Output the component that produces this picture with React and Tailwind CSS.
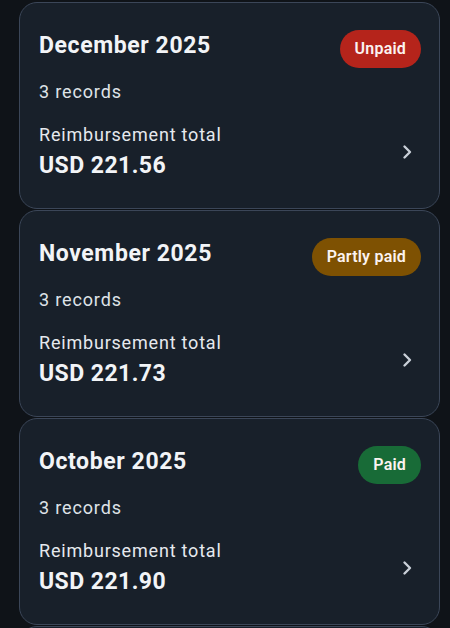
import React from 'react';

const months = [
  { id: 'dec', title: 'December 2025', records: 3, total: 'USD 221.56', status: 'Unpaid' },
  { id: 'nov', title: 'November 2025', records: 3, total: 'USD 221.73', status: 'Partly paid' },
  { id: 'oct', title: 'October 2025', records: 3, total: 'USD 221.90', status: 'Paid' },
  { id: 'sep', title: 'September 2025', records: 3, total: 'USD 222.07', status: 'Paid' },
];

const badgeClass = {
  Unpaid: 'bg-[#b5241b]',
  'Partly paid': 'bg-[#7e5102]',
  Paid: 'bg-[#186b37]',
};

const Chevron = () => (
  <svg width="24" height="24" viewBox="0 0 24 24" fill="none" stroke="#c9cfd8" strokeWidth="2.4" strokeLinecap="round" strokeLinejoin="round">
    <path d="M9.5 6.5 15 12l-5.5 5.5" />
  </svg>
);

const MonthCard = ({ month }) => (
  <div className="rounded-[18px] border border-[#3b4658] bg-[#18202a] pl-[19px] pr-[18px] pt-[27px] pb-[28px]">
    <div className="flex items-start justify-between">
      <h3 className="mt-[2px] text-[23px] leading-[28px] font-bold tracking-[0.6px] text-[#f2f4f7]">{month.title}</h3>
      <span className={`flex h-[38px] items-center rounded-full px-[15px] text-[16px] font-semibold tracking-[0.2px] text-[#fbf3f1] ${badgeClass[month.status]}`}>
        {month.status}
      </span>
    </div>
    <p className="mt-[12px] text-[18px] leading-[24px] tracking-[0.85px] text-[#dfe3e8]">{month.records} records</p>
    <div className="mt-[19px] flex items-center justify-between">
      <div>
        <p className="text-[18px] leading-[24px] tracking-[0.8px] text-[#e6e9ee]">Reimbursement total</p>
        <p className="mt-[5px] text-[23px] leading-[28px] font-bold tracking-[0.45px] text-[#f2f4f7]">{month.total}</p>
      </div>
      <div className="mr-[2px]">
        <Chevron />
      </div>
    </div>
  </div>
);

export default function App() {
  return (
    <div
      className="min-h-screen bg-[#0f1318] pl-[19px] pr-[10px] pt-[2px]"
      style={{ fontFamily: 'Roboto, "Noto Sans", sans-serif' }}
    >
      <div className="flex flex-col gap-[1px]">
        {months.map((m) => (
          <MonthCard key={m.id} month={m} />
        ))}
      </div>
    </div>
  );
}
